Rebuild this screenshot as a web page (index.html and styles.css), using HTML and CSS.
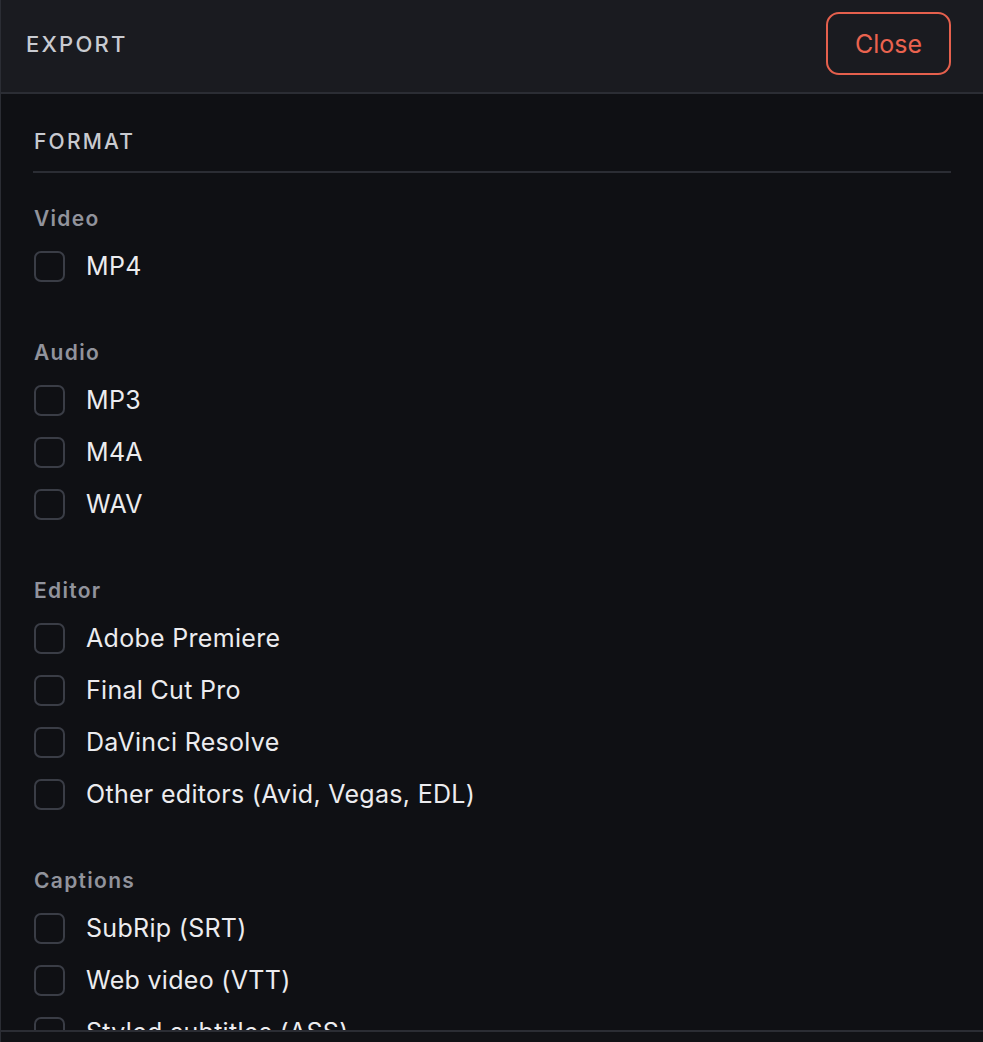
FILE: index.html
```html
<!DOCTYPE html>
<html lang="en">
<head>
<meta charset="utf-8">
<title>Export</title>
<link rel="stylesheet" href="styles.css">
</head>
<body>
<div class="panel">
  <header class="panel-header">
    <h1 class="panel-title">EXPORT</h1>
    <button class="close-btn" type="button">Close</button>
  </header>
  <main class="panel-body">
    <h2 class="section-title">FORMAT</h2>
    <div class="groups">
      <section class="group">
        <h3 class="group-label">Video</h3>
        <ul class="options">
          <li class="option"><span class="box"></span><span class="option-text">MP4</span></li>
        </ul>
      </section>
      <section class="group">
        <h3 class="group-label">Audio</h3>
        <ul class="options">
          <li class="option"><span class="box"></span><span class="option-text">MP3</span></li>
          <li class="option"><span class="box"></span><span class="option-text">M4A</span></li>
          <li class="option"><span class="box"></span><span class="option-text">WAV</span></li>
        </ul>
      </section>
      <section class="group">
        <h3 class="group-label">Editor</h3>
        <ul class="options">
          <li class="option"><span class="box"></span><span class="option-text">Adobe Premiere</span></li>
          <li class="option"><span class="box"></span><span class="option-text">Final Cut Pro</span></li>
          <li class="option"><span class="box"></span><span class="option-text">DaVinci Resolve</span></li>
          <li class="option"><span class="box"></span><span class="option-text">Other editors (Avid, Vegas, EDL)</span></li>
        </ul>
      </section>
      <section class="group">
        <h3 class="group-label">Captions</h3>
        <ul class="options">
          <li class="option"><span class="box"></span><span class="option-text">SubRip (SRT)</span></li>
          <li class="option"><span class="box"></span><span class="option-text">Web video (VTT)</span></li>
          <li class="option"><span class="box"></span><span class="option-text">Styled subtitles (ASS)</span></li>
        </ul>
      </section>
    </div>
  </main>
  <footer class="panel-footer"></footer>
</div>
</body>
</html>
```
FILE: styles.css
```css
* { box-sizing: border-box; }
html, body {
  margin: 0;
  padding: 0;
  height: 100%;
  background: #0f1014;
  font-family: Inter, "Noto Sans", "Liberation Sans", sans-serif;
  color: #ececef;
}
.panel {
  height: 100vh;
  display: flex;
  flex-direction: column;
  border-left: 1px solid #2b2d34;
  overflow: hidden;
}
.panel-header {
  flex: none;
  height: 94px;
  display: flex;
  align-items: flex-start;
  justify-content: space-between;
  padding: 12px 32px 0 25px;
  background: #1a1b20;
  border-bottom: 2px solid #2b2d34;
}
.panel-title {
  margin: 0;
  margin-top: 20px;
  font-size: 22px;
  line-height: 24px;
  font-weight: 500;
  letter-spacing: 2.2px;
  color: #c9cbd1;
}
.close-btn {
  width: 125px;
  height: 63px;
  border: 2px solid #e5604d;
  border-radius: 13px;
  background: transparent;
  color: #ea634f;
  font-family: inherit;
  font-size: 25px;
  font-weight: 400;
  padding: 0;
  cursor: pointer;
}
.panel-body {
  flex: 1;
  min-height: 0;
  overflow: hidden;
  padding: 34px 32px 0 32px;
}
.section-title {
  margin: 0;
  padding: 0 0 15px 1px;
  font-size: 21px;
  line-height: 28px;
  font-weight: 500;
  letter-spacing: 2.2px;
  color: #c8cad0;
  border-bottom: 2px solid #2b2d34;
}
.groups {
  display: flex;
  flex-direction: column;
  gap: 53px;
  padding-top: 32px;
  padding-left: 1px;
}
.group-label {
  margin: 0 0 13px;
  font-size: 21px;
  line-height: 28px;
  font-weight: 600;
  letter-spacing: 1.3px;
  color: #91939c;
}
.options {
  list-style: none;
  margin: 0;
  padding: 0;
  display: flex;
  flex-direction: column;
  gap: 12px;
}
.option {
  display: flex;
  align-items: center;
  gap: 21px;
  min-height: 40px;
}
.box {
  flex: none;
  width: 31px;
  height: 31px;
  border: 2px solid #3a3d46;
  border-radius: 7px;
}
.option-text {
  font-size: 25px;
  line-height: 30px;
  letter-spacing: 0.3px;
  color: #ececef;
}
.panel-footer {
  flex: none;
  height: 12px;
  border-top: 2px solid #2b2d34;
  background: #111216;
}
```
